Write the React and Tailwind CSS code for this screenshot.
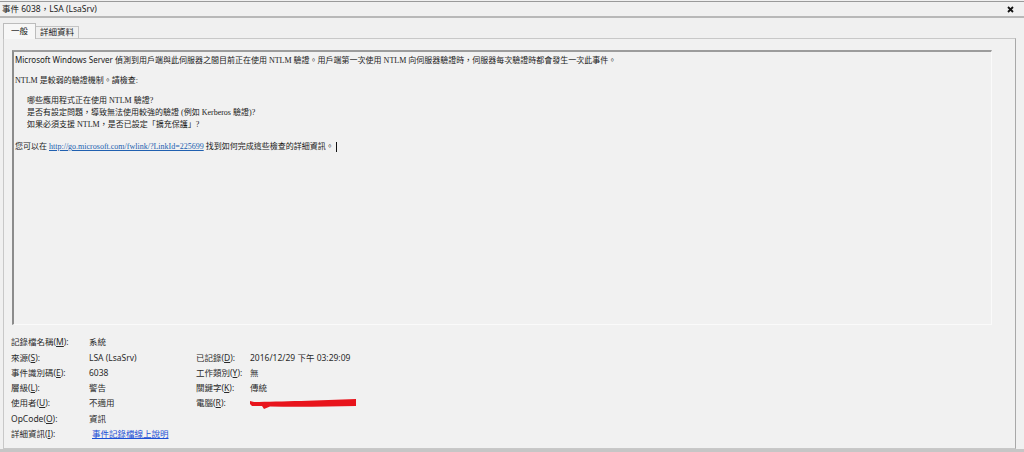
import React from "react"

const sans = "font-['Noto_Sans','Noto_Sans_CJK_TC',sans-serif]"
const serif = "font-['Liberation_Serif','Noto_Sans_CJK_TC',serif]"

function Key({ text, k }) {
    return (
        <span>
            {text}(<span className="underline">{k}</span>):
        </span>
    )
}

function Scribble() {
    return (
        <svg width="108" height="12" viewBox="0 0 108 12" className="block">
            <path d="M0 3 L4 4 C 30 3.5, 70 2.5, 106 1 L106 8 C 80 8.5, 50 9, 20 8.5 L14 11 L12 8 L2 8 L0 6 Z" fill="#e8141c" />
        </svg>
    )
}

export default function App() {
    const rows = [
        [<Key text="記錄檔名稱" k="M" />, "系統", null, null],
        [<Key text="來源" k="S" />, "LSA (LsaSrv)", <Key text="已記錄" k="D" />, "2016/12/29 下午 03:29:09"],
        [<Key text="事件識別碼" k="E" />, "6038", <Key text="工作類別" k="Y" />, "無"],
        [<Key text="層級" k="L" />, "警告", <Key text="關鍵字" k="K" />, "傳統"],
        [<Key text="使用者" k="U" />, "不適用", <Key text="電腦" k="R" />, <Scribble />],
        [<Key text="OpCode" k="O" />, "資訊", null, null],
        [<Key text="詳細資訊" k="I" />, <span className="ml-[3px] text-[#1a4fd6] underline">事件記錄檔線上說明</span>, null, null],
    ]

    return (
        <div className={`w-[1024px] h-[452px] bg-[#f0f0f0] overflow-hidden flex flex-col text-[#1a1a1a] ${sans}`}>
            {/* title bar */}
            <div className="mt-[1px] h-[17px] border-t border-[#9a9a9a] border-b-2 border-b-[#b8b8b8] flex items-center justify-between pl-[2px] pr-[10px]">
                <span className="text-[8.5px] leading-none text-[#222]">事件 6038，LSA (LsaSrv)</span>
                <svg width="7" height="7" viewBox="0 0 7 7">
                    <path d="M1 1 L6 6 M6 1 L1 6" stroke="#111" strokeWidth="1.8" />
                </svg>
            </div>

            {/* tabs */}
            <div className="flex items-end h-[20px] pl-[3px] text-[8.5px]">
                <div className="h-[16px] w-[33px] bg-[#f7f7f7] border border-b-0 border-[#bcbcbc] flex items-center justify-center relative top-[1px]">一般</div>
                <div className="h-[12px] w-[43px] bg-[#f0f0f0] border border-b-0 border-l-0 border-[#c4c4c4] flex items-center justify-center">詳細資料</div>
            </div>

            {/* panel */}
            <div className="flex-1 ml-[3px] mr-[8px] border border-[#c8c8c8] border-r-[#a8a8a8] bg-[#f1f1f1] flex flex-col">
                <div className="ml-[8px] mr-[23px] mt-[11px] h-[275px] border-t-2 border-l-2 border-t-[#9c9c9c] border-l-[#8c8c8c] border-r border-b border-r-[#fafafa] border-b-[#fafafa] pt-[2px] pl-[1px] text-[8px] leading-[12px]">
                    <div>
                        <span className={sans}>Microsoft Windows Server </span>
                        <span className={serif}>偵測到用戶端與此伺服器之間目前正在使用 NTLM 驗證。用戶端第一次使用 NTLM 向伺服器驗證時，伺服器每次驗證時都會發生一次此事件。</span>
                    </div>
                    <div className={`mt-[8px] ${serif}`}>NTLM 是較弱的驗證機制。請檢查:</div>
                    <div className={`mt-[8px] pl-[12px] ${serif}`}>
                        <div>哪些應用程式正在使用 NTLM 驗證?</div>
                        <div>是否有設定問題，導致無法使用較強的驗證 (例如 Kerberos 驗證)?</div>
                        <div>如果必須支援 NTLM，是否已設定「擴充保護」?</div>
                    </div>
                    <div className={`mt-[10px] flex items-center ${serif}`}>
                        <span>您可以在 </span>
                        <span className="text-[#2060b0] underline mx-[2px]">http://go.microsoft.com/fwlink/?LinkId=225699</span>
                        <span> 找到如何完成這些檢查的詳細資訊。</span>
                        <span className="ml-[2px] w-px h-[10px] bg-[#111]" />
                    </div>
                </div>

                <div className="mt-[10px] ml-[7px] grid grid-cols-[78px_107px_54px_1fr] auto-rows-[15.3px] items-center text-[8.5px] text-[#2a2a2a]">
                    {rows.map((r, i) => (
                        <React.Fragment key={i}>
                            <div>{r[0]}</div>
                            <div>{r[1]}</div>
                            <div>{r[2]}</div>
                            <div>{r[3]}</div>
                        </React.Fragment>
                    ))}
                </div>
            </div>
            <div className="h-[3px] bg-[#c6c6c6]" />
        </div>
    )
}
